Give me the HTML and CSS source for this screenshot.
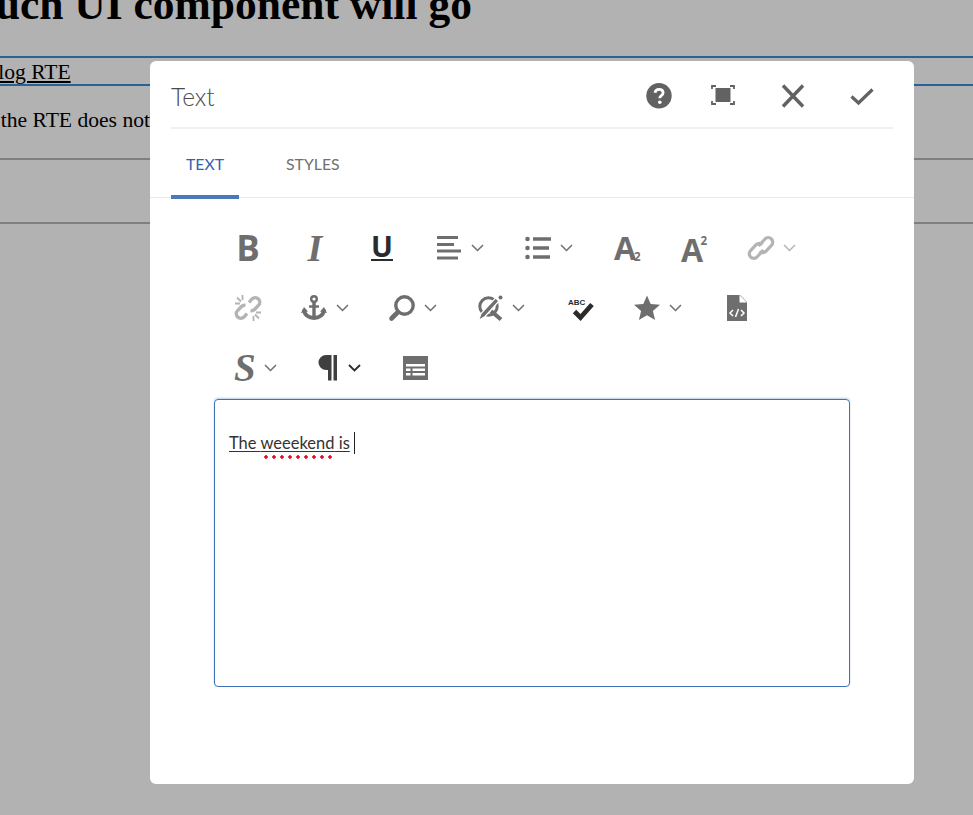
FILE: index.html
```html
<!DOCTYPE html>
<html lang="en">
<head>
<meta charset="utf-8">
<title>Dialog RTE</title>
<link rel="stylesheet" href="styles.css">
</head>
<body>
<main class="page">
  <h1 class="page-title">Touch UI component will go</h1>
  <div class="page-link-row"><a class="page-link">Dialog RTE</a></div>
  <p class="page-note">If the RTE does not</p>
  <div class="page-empty"></div>
</main>

<section class="dialog">
  <header class="dialog-head">
    <h2 class="dialog-title">Text</h2>
    <div class="dialog-actions">
      <svg class="ico act-help" viewBox="0 0 26 26"><circle cx="13" cy="12.7" r="12.7" fill="#626262"/><path d="M9 9.8c.3-2.3 2-3.5 4.1-3.5 2.3 0 4 1.3 4 3.4 0 1.700-1 2.500-2 3.200-.9.600-1.300 1-1.300 2v.4" fill="none" stroke="#fff" stroke-width="2.800"/><circle cx="13.800" cy="19.300" r="1.800" fill="#fff"/></svg>
      <svg class="ico act-full" viewBox="0 0 26 26"><path d="M2 6V3h4M20 3h4v3M24 18v3h-4M6 21H2v-3" fill="none" stroke="#626262" stroke-width="1.800"/><rect x="5.500" y="5" width="15" height="14" fill="#626262"/></svg>
      <svg class="ico act-close" viewBox="0 0 26 26"><path d="M3 2.500l20 21M23 2.500l-20 21" fill="none" stroke="#626262" stroke-width="3.400"/></svg>
      <svg class="ico act-ok" viewBox="0 0 26 26"><path d="M2.500 13.500l7 6.500L23.500 6.500" fill="none" stroke="#626262" stroke-width="3.200"/></svg>
    </div>
  </header>

  <nav class="tabs">
    <a class="tab tab-active">TEXT</a>
    <a class="tab">STYLES</a>
  </nav>

  <div class="toolbar">
    <div class="tool-row">
      <div class="tool"><svg class="ico" viewBox="0 0 26 26"><text class="g g-b" x="13" y="26" text-anchor="middle">B</text></svg></div>
      <div class="tool"><svg class="ico" viewBox="0 0 26 26"><text class="g g-i" x="13" y="26" text-anchor="middle">I</text></svg></div>
      <div class="tool"><svg class="ico" viewBox="0 0 26 26"><text class="g g-u" x="13" y="22" text-anchor="middle">U</text><rect x="2" y="24" width="22" height="2" fill="#2b2b2b"/></svg></div>
      <div class="tool"><svg class="ico" viewBox="0 0 26 26"><path d="M1 2.500h21M1 9.500h17M1 16h24M1 23h21" stroke="#6e6e6e" stroke-width="3"/></svg><svg class="chev" viewBox="0 0 13 8"><path d="M1 1l5.500 5.500L12 1" fill="none" stroke="#6e6e6e" stroke-width="1.500"/></svg></div>
      <div class="tool"><svg class="ico" viewBox="0 0 26 26"><circle cx="2.500" cy="4" r="2.300" fill="#6e6e6e"/><circle cx="2.500" cy="13" r="2.300" fill="#6e6e6e"/><circle cx="2.500" cy="22" r="2.300" fill="#6e6e6e"/><path d="M8 4h18M8 13h16M8 22h17" stroke="#6e6e6e" stroke-width="3.600"/></svg><svg class="chev" viewBox="0 0 13 8"><path d="M1 1l5.500 5.500L12 1" fill="none" stroke="#6e6e6e" stroke-width="1.500"/></svg></div>
      <div class="tool"><svg class="ico" viewBox="0 0 26 26"><text class="g g-a" x="0" y="25">A</text><text class="g g-s" x="20" y="26">2</text></svg></div>
      <div class="tool"><svg class="ico" viewBox="0 0 26 26"><text class="g g-a" x="0" y="26.500">A</text><text class="g g-s" x="19.500" y="10">2</text></svg></div>
      <div class="tool tool-off"><svg class="ico" viewBox="0 0 26 26"><path d="M10.500 11l6.500-7a4.500 4.500 0 0 1 6.400 6.400l-5.500 6a4.500 4.500 0 0 1-6.400 0M15.500 15l-6.500 7a4.500 4.500 0 0 1-6.400-6.400l5.500-6a4.500 4.500 0 0 1 6.400 0" fill="none" stroke="#b4b4b4" stroke-width="3.200"/></svg><svg class="chev" viewBox="0 0 13 8"><path d="M1 1l5.500 5.500L12 1" fill="none" stroke="#b4b4b4" stroke-width="1.500"/></svg></div>
    </div>
    <div class="tool-row tool-row-tight">
      <div class="tool"><svg class="ico" viewBox="0 0 26 26"><path d="M14 7.500l3-3.500a4.500 4.500 0 0 1 6.400 6.400L19.500 14.500a4.500 4.500 0 0 1-4 1.200M12 18.500l-3 3.500a4.500 4.500 0 0 1-6.400-6.400L6.500 11.500a4.500 4.500 0 0 1 4-1.200" fill="none" stroke="#b4b4b4" stroke-width="3.400"/><path d="M7.500 0v5M0 8.500h5M2 2.500l4 4M18.500 26v-5M26 17.500h-5M24 23.500l-4-4" stroke="#b4b4b4" stroke-width="1.800" fill="none"/></svg></div>
      <div class="tool"><svg class="ico" viewBox="0 0 26 26"><circle cx="13" cy="4" r="2.800" fill="none" stroke="#6e6e6e" stroke-width="2.400"/><path d="M13 7v17" stroke="#6e6e6e" stroke-width="3.400"/><path d="M8 11.500h10" stroke="#6e6e6e" stroke-width="2.400"/><path d="M3 14.500c0 5.500 5 8.500 10 8.500s10-3 10-8.500" fill="none" stroke="#6e6e6e" stroke-width="3.800"/><path d="M0 18l3-6 4 4.500zM19 16.500l4-4.500 3 6z" fill="#6e6e6e"/></svg><svg class="chev" viewBox="0 0 13 8"><path d="M1 1l5.500 5.500L12 1" fill="none" stroke="#6e6e6e" stroke-width="1.500"/></svg></div>
      <div class="tool"><svg class="ico" viewBox="0 0 26 26"><circle cx="15.500" cy="10.500" r="8.700" fill="none" stroke="#6e6e6e" stroke-width="3.400"/><path d="M9 17L2.500 23.500" stroke="#6e6e6e" stroke-width="4.600" stroke-linecap="round"/></svg><svg class="chev" viewBox="0 0 13 8"><path d="M1 1l5.500 5.500L12 1" fill="none" stroke="#6e6e6e" stroke-width="1.500"/></svg></div>
      <div class="tool"><svg class="ico" viewBox="0 0 26 26"><circle cx="11.500" cy="11.500" r="8.700" fill="none" stroke="#6e6e6e" stroke-width="3"/><path d="M14 16l10 8.500" stroke="#6e6e6e" stroke-width="4"/><path d="M22 6L8 21.500 1.500 25.500l2.500-7L18.500 3z" fill="#6e6e6e" stroke="#fff" stroke-width="1.200"/><circle cx="23.500" cy="2.500" r="2" fill="#6e6e6e"/></svg><svg class="chev" viewBox="0 0 13 8"><path d="M1 1l5.500 5.500L12 1" fill="none" stroke="#6e6e6e" stroke-width="1.500"/></svg></div>
      <div class="tool tool-abc"><svg class="ico" viewBox="0 0 26 26"><text class="g g-abc" x="0" y="10">ABC</text><path d="M6.500 16.500l6 6L24 9.500" fill="none" stroke="#2b2b2b" stroke-width="4.800"/></svg></div>
      <div class="tool"><svg class="ico" viewBox="0 0 26 26"><path d="M13 .5l3.700 8.600 9.300.7-7.100 6.100 2.200 9.100L13 20.200l-8.100 4.800 2.200-9.100L0 9.800l9.300-.7z" fill="#6e6e6e"/></svg><svg class="chev" viewBox="0 0 13 8"><path d="M1 1l5.500 5.500L12 1" fill="none" stroke="#6e6e6e" stroke-width="1.500"/></svg></div>
      <div class="tool tool-file"><svg class="ico" viewBox="0 0 26 26"><path d="M3 0h13l7 7v19H3z" fill="#6e6e6e"/><path d="M15.500 0v7.500H23z" fill="#fff"/><path d="M9 15l-3 3 3 3M17 15l3 3-3 3M14.500 14l-3 8" fill="none" stroke="#fff" stroke-width="1.500"/></svg></div>
    </div>
    <div class="tool-row">
      <div class="tool tool-s"><svg class="ico" viewBox="0 0 26 26"><text class="g g-st" x="0" y="26">S</text></svg><svg class="chev" viewBox="0 0 13 8"><path d="M1 1l5.500 5.500L12 1" fill="none" stroke="#6e6e6e" stroke-width="1.500"/></svg></div>
      <div class="tool tool-p"><svg class="ico" viewBox="0 0 26 26"><path d="M20.500 0H8a7.500 7.500 0 0 0 0 15h2v10.500h3.500V0zM15.500 0H19v25.500h-3.500z" fill="#3f3f3f"/></svg><svg class="chev" viewBox="0 0 13 8"><path d="M1 1l5.500 5.500L12 1" fill="none" stroke="#2b2b2b" stroke-width="1.800"/></svg></div>
      <div class="tool"><svg class="ico" viewBox="0 0 26 26"><path d="M1 1h25v24H1z" fill="#6e6e6e"/><path d="M4 9h19v2.500H4zM4 13.500h4.500V16H4zM10.500 13.500H23V16H10.500zM4 18h4.500v2.500H4zM10.500 18H23v2.500H10.500z" fill="#fff"/></svg></div>
    </div>
  </div>

  <div class="editor">
    <p class="editor-line"><span class="editor-text">The <span class="misspelt">weeekend</span> is</span><span class="caret"></span></p>
  </div>
</section>
</body>
</html>
```
FILE: styles.css
```css
* { box-sizing: border-box; }
html, body { margin: 0; height: 815px; overflow: hidden; }
body { background: #b2b2b2; color: #000; font-family: "Liberation Serif", serif; }

.page { width: 973px; }
.page-title { margin: -19px 0 0 -51px; font-size: 43.5px; line-height: 46px; font-weight: 700; white-space: nowrap; }
.page-link-row { margin-top: 29px; height: 30px; border-top: 2px solid #2a6199; border-bottom: 2px solid #2a6199; font-size: 21.6px; line-height: 28px; overflow: hidden; }
.page-link { display: block; margin-left: -33px; text-decoration: underline; }
.page-note { margin: 21px 0 0 -19px; font-size: 21.6px; line-height: 26px; height: 26px; white-space: nowrap; }
.page-empty { margin-top: 25px; height: 66px; border-top: 2px solid #7f7f7f; border-bottom: 2px solid #7f7f7f; }

.dialog { position: absolute; left: 150px; top: 61px; width: 764px; height: 723px; background: #fff; border-radius: 6px; font-family: Lato, sans-serif; }
.dialog-head { display: flex; align-items: center; justify-content: space-between; height: 68px; margin: 0 21px; border-bottom: 2px solid #f0f0f0; padding-top: 4px; }
.dialog-title { margin: 0; font-size: 24.5px; font-weight: 300; color: #4b4b4b; }
.dialog-actions { display: flex; align-items: center; padding-right: 18px; }
.ico { display: block; width: 26px; height: 26px; flex: none; overflow: visible; }
.act-full { margin-left: 38px; }
.act-close { margin-left: 44px; }
.act-ok { margin-left: 43px; }

.tabs { display: flex; gap: 32px; height: 69px; padding-left: 21px; border-bottom: 1px solid #e8e8e8; }
.tab { display: flex; align-items: center; height: 70px; padding: 3px 15px 0; border-bottom: 4px solid transparent; font-size: 15.8px; color: #707070; }
.tab-active { color: #2f62b0; border-bottom-color: #4a78bb; }

.toolbar { display: flex; flex-direction: column; gap: 34px; padding: 37px 0 0 85px; }
.tool-row { display: flex; gap: 41px; height: 26px; }
.tool-row-tight { gap: 40px; }
.tool { display: flex; align-items: center; gap: 9px; }
.tool-abc { margin-left: 3px; }
.tool-file { margin-left: 2px; }
.tool-s { margin-left: -1px; gap: 4px; }
.tool-p { gap: 4px; }
.chev { display: block; width: 13px; height: 8px; flex: none; }

.g { fill: #6e6e6e; }
.g-b { font: 700 35px "Open Sans", sans-serif; }
.g-i { font: italic 700 38px "Liberation Serif", serif; }
.g-u { font: 700 29px "Open Sans", sans-serif; fill: #2b2b2b; }
.g-a { font: 700 32px "Open Sans", sans-serif; }
.g-s { font: 700 11.5px "Open Sans", sans-serif; }
.g-abc { font: 700 8px "Liberation Sans", sans-serif; fill: #2b2b2b; }
.g-st { font: italic 700 39px "Liberation Serif", serif; }

.editor { width: 636px; height: 288px; margin: 18px 0 0 64px; padding: 32px 14px 0; border: 1px solid #3f72ba; border-radius: 4px; box-shadow: 0 -1px 2px rgba(63, 114, 186, .35); }
.editor-line { display: flex; align-items: center; margin: 0; height: 22px; font-size: 16.5px; line-height: 22px; color: #333; }
.editor-text { text-decoration: underline; text-underline-offset: 2px; white-space: pre; }
.misspelt { position: relative; }
.misspelt::after { content: ""; position: absolute; left: 4px; right: 0; bottom: -6px; height: 4px; background: radial-gradient(circle at 2px 2px, #e0112b 1.500px, transparent 1.900px) 0 0 / 8px 4px repeat-x; }
.caret { width: 1px; height: 22px; margin-left: 4px; background: #222; }
```
